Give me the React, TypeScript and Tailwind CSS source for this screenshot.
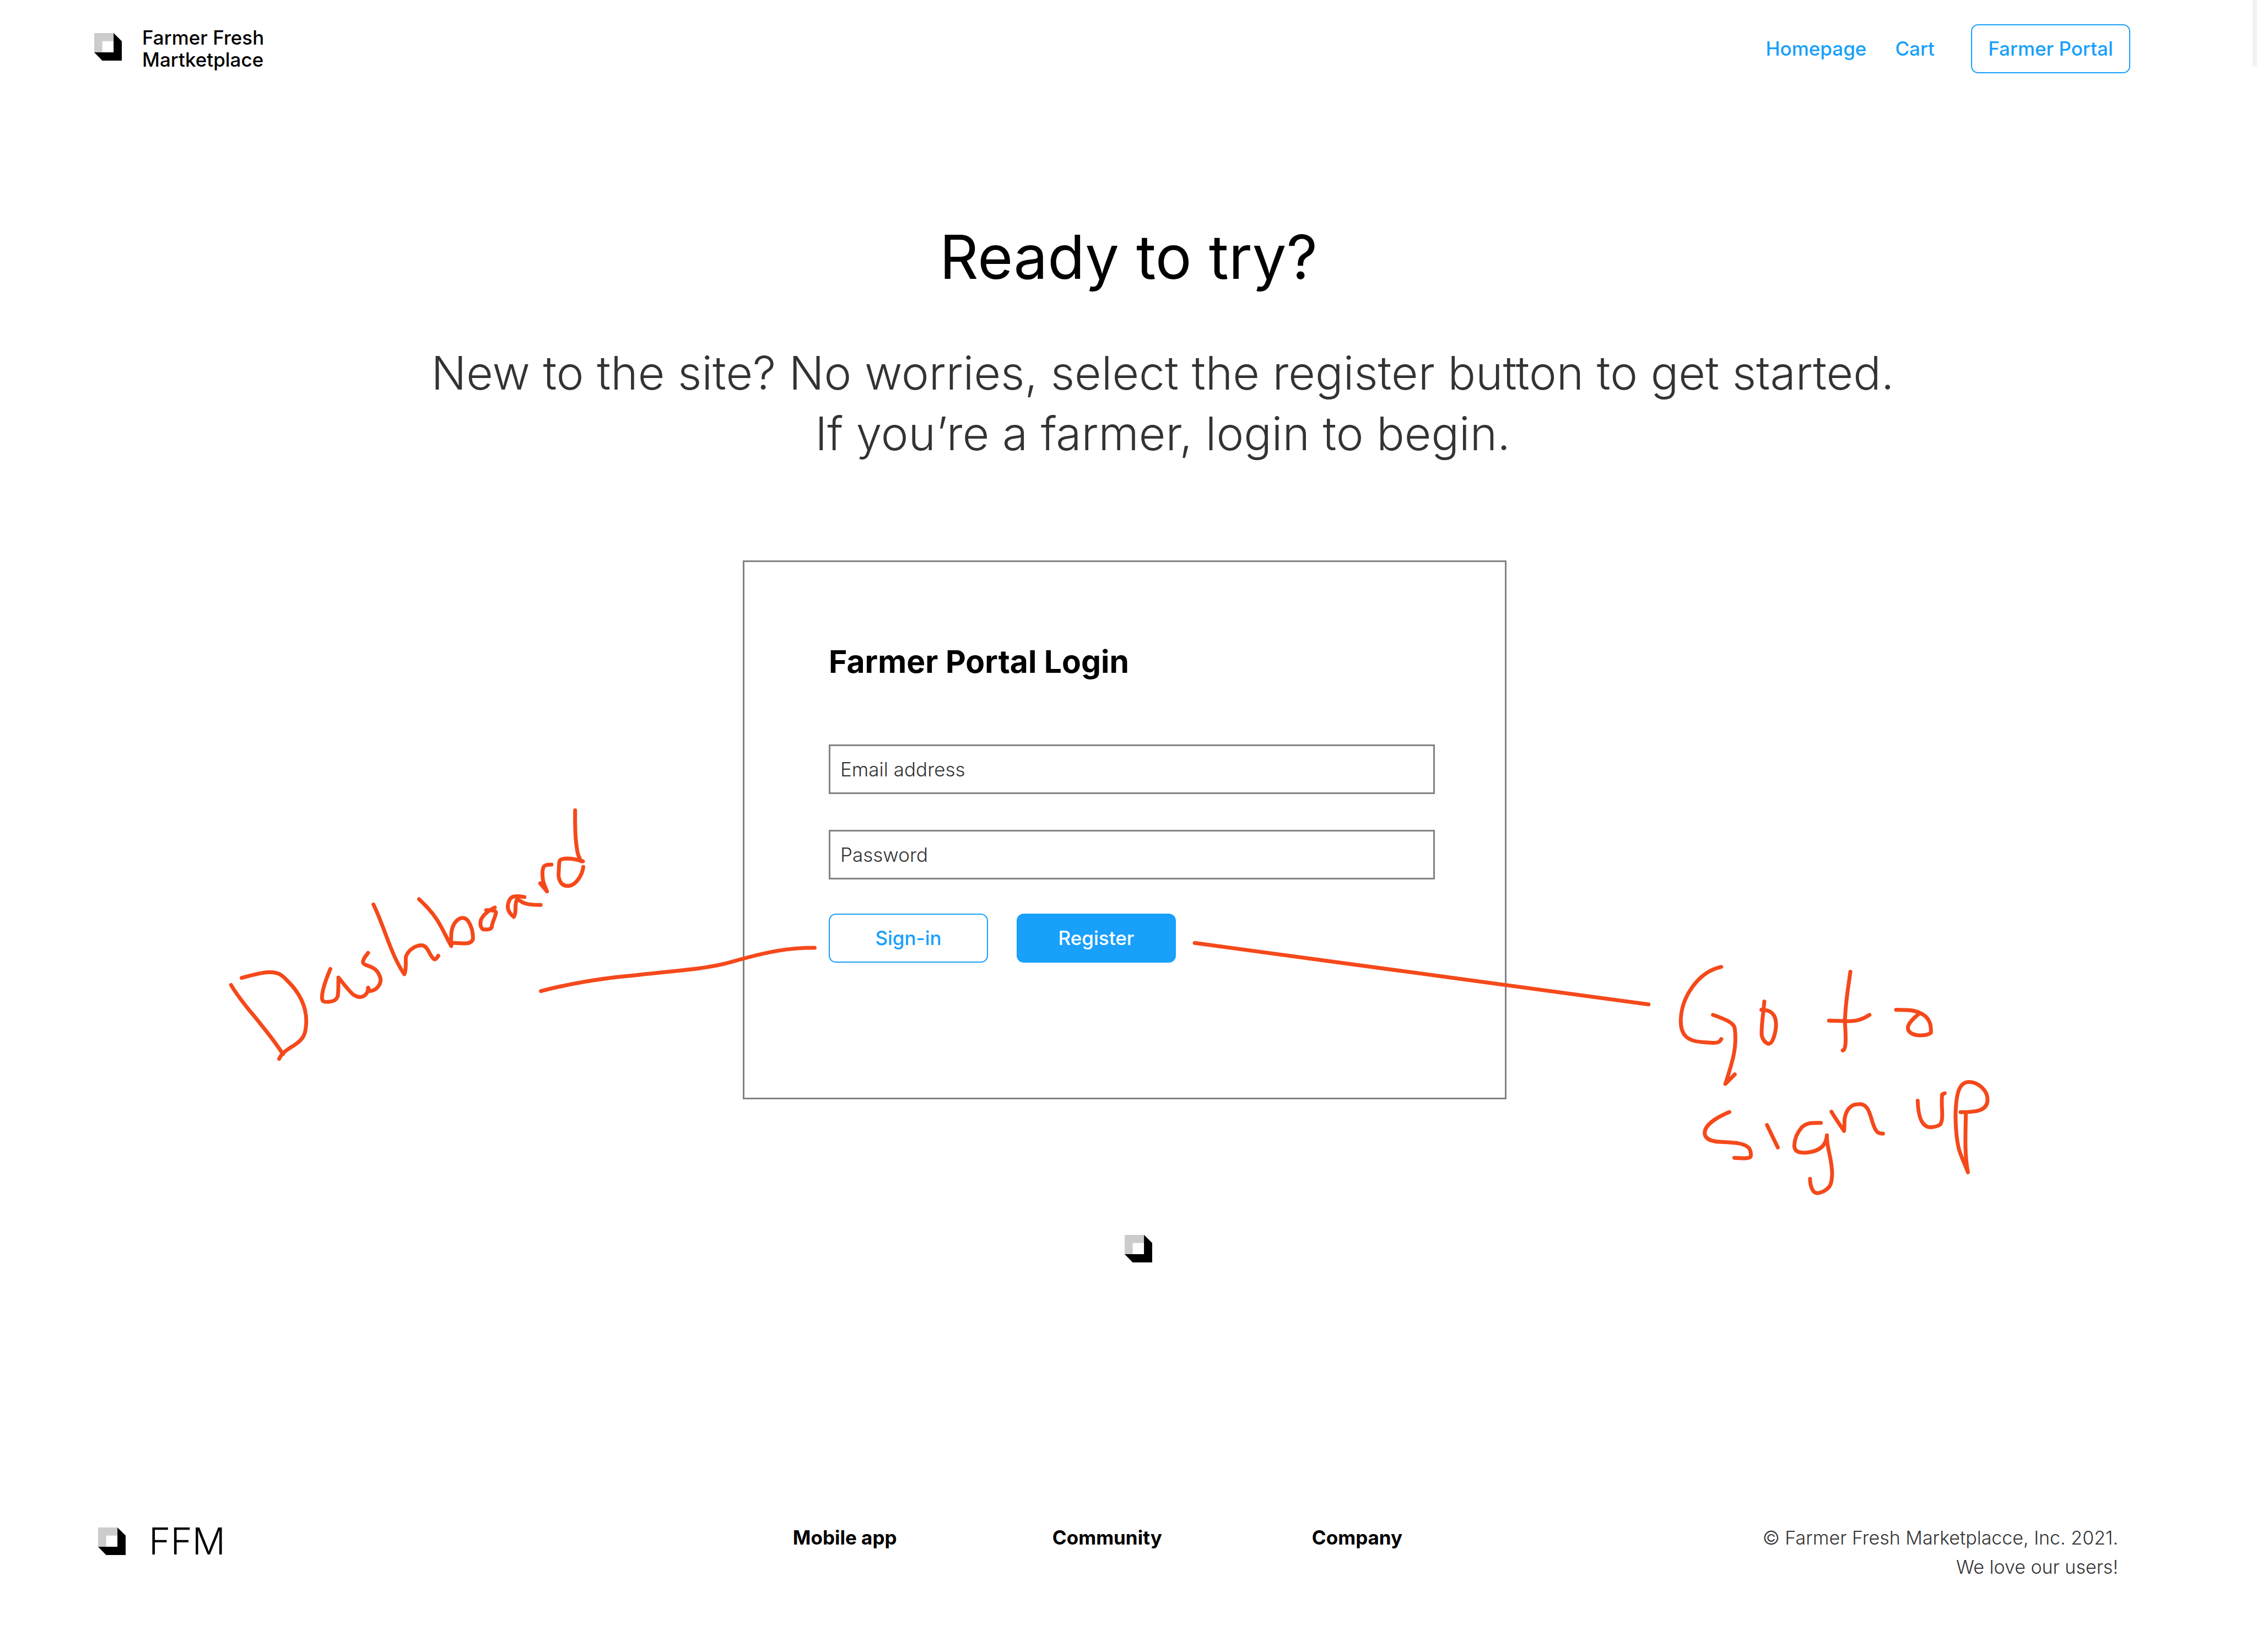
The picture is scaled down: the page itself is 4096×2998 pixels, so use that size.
const INK = "#f5491b";

function CubeMark() {
  return (
    <svg viewBox="0 0 188 188" className="size-[50px] shrink-0" aria-hidden="true">
      <path d="M0 0H132V55H55V132H0Z" fill="#cccccc" />
      <path d="M132 0L188 55V188H55L0 132H132Z" fill="#000000" />
    </svg>
  );
}

const dashboardNote = [
  "M75 1056C115 1150 160 1215 190 1270C225 1330 255 1385 280 1440",
  "M117 1017C150 1005 190 986 228 985C262 986 275 1000 292 1025C345 1095 373 1170 372 1262C370 1330 362 1355 325 1390C295 1415 275 1435 265 1466",
  "M467 967C445 1040 433 1095 434 1130C436 1148 440 1150 455 1150C480 1149 492 1140 496 1118C500 1090 498 1050 499 1015C520 1050 545 1098 560 1112C575 1125 590 1127 602 1115C614 1100 616 1090 616 1071",
  "M616 1071L622 1090C650 1088 668 1050 665 1020C655 970 635 958 612 948C595 940 592 930 600 910C604 898 610 890 616 878",
  "M637 609C665 690 685 780 710 865C725 915 740 960 759 996C768 970 763 930 765 900C775 860 805 835 828 836C855 840 858 900 878 914C884 914 888 905 893 894",
  "M817 580C860 635 885 680 905 735C920 775 932 810 944 840C944 790 940 750 958 712C975 680 995 675 1010 700C1025 730 1030 770 1030 800C1026 820 1015 825 1000 825C980 825 960 822 944 822",
  "M1082 641C1110 640 1123 645 1120 660C1115 690 1106 705 1104 735C1100 748 1090 749 1070 748C1055 735 1058 700 1065 685C1075 660 1095 640 1116 626",
  "M1233 568C1190 558 1180 565 1172 590C1163 620 1165 650 1191 678C1205 650 1190 610 1205 578C1225 600 1235 612 1297 612",
  "M1340 388C1310 388 1306 395 1304 430C1304 490 1312 500 1322 537L1295 492",
  "M1433 87C1432 180 1434 250 1440 300C1443 335 1448 350 1457 370L1464 370C1430 355 1415 354 1400 354C1375 356 1371 362 1370 380C1368 440 1365 455 1372 475C1378 500 1390 507 1406 507C1438 504 1462 440 1465 401",
];

const signUpNote = [
  "M272 131C170 160 93 310 92 450C92 540 125 570 185 576C240 581 262 588 272 558",
  "M235 415C300 445 325 465 331 490C345 600 320 700 290 824L332 767",
  "M463 336C460 400 451 450 451 530C455 570 475 586 484 586C500 584 515 520 515 470C514 420 500 385 450 385",
  "M845 160C835 260 822 350 821 460C825 540 828 625 811 625",
  "M750 449L825 452C860 453 890 450 930 415",
  "M1048 385C1120 385 1145 390 1175 420C1203 450 1203 490 1203 520C1190 537 1165 537 1145 536C1110 530 1095 505 1102 480C1110 450 1135 425 1150 408",
  "M308 990C245 1025 198 1070 198 1115C200 1150 225 1165 270 1167C330 1171 375 1172 396 1205C405 1225 405 1240 402 1255C395 1268 360 1263 330 1261",
  "M475 1067L523 1200",
  "M714 1054C670 1053 650 1055 630 1080C610 1110 597 1150 596 1190C598 1225 615 1231 645 1231C710 1225 738 1185 741 1128C738 1195 765 1270 764 1360C762 1430 750 1440 725 1460C700 1475 685 1475 675 1445C668 1425 666 1410 666 1385",
  "M761 988C780 1030 800 1070 817 1102C822 1060 812 1030 832 980C850 945 870 943 888 943C930 942 935 1030 950 1075C960 1110 970 1118 990 1118",
  "M1144 923C1146 1010 1160 1078 1200 1080C1225 1080 1235 1072 1245 1063C1262 1020 1245 950 1253 885L1264 879",
  "M1334 991C1400 991 1455 985 1454 915C1454 860 1410 812 1372 812C1325 812 1315 890 1312 1000C1312 1090 1318 1165 1328 1215C1340 1265 1357 1310 1367 1347C1353 1250 1355 1150 1358 1000",
];

const connectors = [
  "M1225 2245C1290 2228 1365 2216 1430 2210C1530 2198 1600 2196 1660 2178C1740 2155 1785 2147 1845 2147",
  "M2706 2136L3734 2275",
];

function Stroke({ d }: { d: string }) {
  return <path d={d} vectorEffect="non-scaling-stroke" />;
}

function Annotations() {
  return (
    <svg
      viewBox="0 0 5112 3742"
      className="pointer-events-none absolute inset-0 h-full w-full"
      fill="none"
      stroke={INK}
      strokeWidth="7"
      strokeLinecap="round"
      strokeLinejoin="round"
      role="img"
      aria-label="Handwritten notes: Dashboard, Go to sign up"
    >
      <g transform="translate(480 1800) scale(0.574 0.4082)">
        {dashboardNote.map((d) => (
          <Stroke key={d} d={d} />
        ))}
      </g>
      <g transform="translate(3760 2140) scale(0.5102 0.3827)">
        {signUpNote.map((d) => (
          <Stroke key={d} d={d} />
        ))}
      </g>
      {connectors.map((d) => (
        <Stroke key={d} d={d} />
      ))}
    </svg>
  );
}

function Field({ label, type }: { label: string; type: string }) {
  return (
    <input
      type={type}
      aria-label={label}
      placeholder={label}
      className="block h-[90px] w-full border-3 border-[#828282] bg-white px-[18px] text-[35px] font-light text-[#333333] placeholder:text-[#333333] placeholder:opacity-100"
    />
  );
}

export default function App() {
  return (
    <div className="relative flex min-h-screen flex-col bg-white font-['Inter',sans-serif] text-black">
      <header className="flex items-start justify-between pt-[44px] pr-[230px] pl-[171px]">
        <a href="#home" className="flex items-start gap-[37px] pt-1 text-[35px] leading-[40px] font-[450]">
          <span className="pt-3">
            <CubeMark />
          </span>
          <span>
            Farmer Fresh
            <br />
            Martketplace
          </span>
        </a>
        <nav className="flex items-center text-[35px] font-[450] text-[#18a0fb]">
          <a href="#homepage">Homepage</a>
          <a href="#cart" className="ml-[52px]">
            Cart
          </a>
          <a
            href="#portal"
            className="ml-[66px] flex h-[89px] w-[289px] items-center justify-center rounded-[13px] border-2 border-[#18a0fb]"
          >
            Farmer Portal
          </a>
        </nav>
      </header>
      <div className="absolute top-0 right-0 h-[120px] w-2 bg-[#f2f2f2]" />

      <main className="flex grow flex-col items-center">
        <h1 className="mt-[268px] text-[110px] leading-[130px]">Ready to try?</h1>
        <p className="mt-[91px] pl-[124px] text-center text-[84px] leading-[110px] font-light text-[#333333]">
          New to the site? No worries, select the register button to get started.
          <br />
          If you’re a farmer, login to begin.
        </p>

        <form
          className="mt-[175px] mr-[14px] flex w-[1386px] flex-col border-3 border-[#828282] pt-[147px] pr-[127px] pb-[245px] pl-[153px]"
          onSubmit={(e) => e.preventDefault()}
        >
          <h2 className="text-[57px] leading-[68px] font-bold">Farmer Portal Login</h2>
          <div className="mt-[116px] flex flex-col gap-[65px]">
            <Field label="Email address" type="email" />
            <Field label="Password" type="password" />
          </div>
          <div className="mt-[62px] flex gap-[52px] text-[35px] font-[450]">
            <button
              type="submit"
              className="h-[89px] w-[289px] rounded-[13px] border-2 border-[#18a0fb] text-[#18a0fb]"
            >
              Sign-in
            </button>
            <button type="button" className="h-[89px] w-[289px] rounded-[13px] bg-[#18a0fb] text-white">
              Register
            </button>
          </div>
        </form>

        <div className="mt-[246px] pl-[36px]">
          <CubeMark />
        </div>
      </main>

      <footer className="grid grid-cols-[1fr_auto_1fr] items-start pr-[252px] pb-[128px] pl-[178px] leading-[53px]">
        <a href="#top" className="flex items-center gap-[42px]">
          <CubeMark />
          <span className="text-[67px] leading-[66px] font-[350]">FFM</span>
        </a>
        <nav className="mr-[38px] grid grid-cols-[471px_471px_auto] text-[35px] font-bold">
          <a href="#app">Mobile app</a>
          <a href="#community">Community</a>
          <a href="#company">Company</a>
        </nav>
        <p className="text-right text-[34px] font-light text-[#333333]">
          © Farmer Fresh Marketplacce, Inc. 2021.
          <br />
          We love our users!
        </p>
      </footer>
      <Annotations />
    </div>
  );
}
